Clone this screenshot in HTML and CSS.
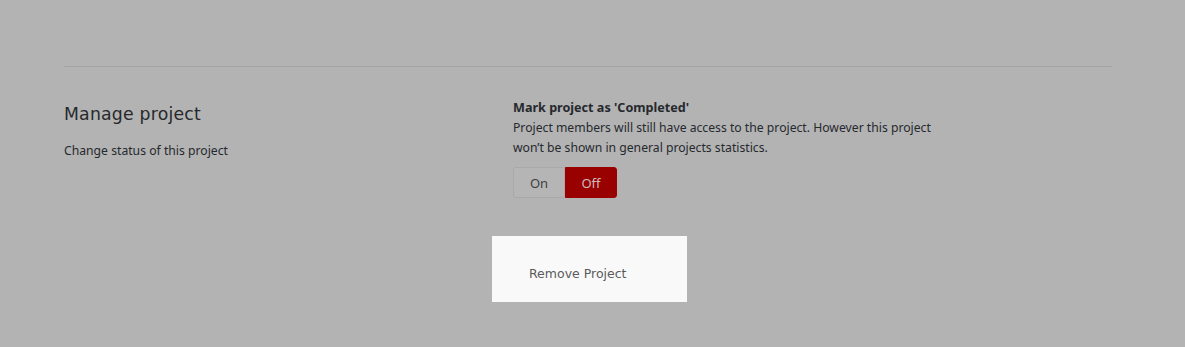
FILE: index.html
```html
<!DOCTYPE html>
<html lang="en">
<head>
  <meta charset="UTF-8" />
  <meta name="viewport" content="width=device-width, initial-scale=1" />
  <title>Project settings</title>
  <link rel="stylesheet" href="styles.css">
</head>
<body>
  <div class="container">
    <hr class="divider">

    <div class="section">
      <div class="section-info">
        <h2>Manage project</h2>
        <p>Change status of this project</p>
      </div>

      <div class="section-body">
        <h4>Mark project as 'Completed'</h4>
        <p class="hint">Project members will still have access to the project. However this project<br>won’t be shown in general projects statistics.</p>

        <div class="toggle">
          <button class="toggle-btn">On</button>
          <button class="toggle-btn active">Off</button>
        </div>

        <div class="spotlight">
          <button class="remove-btn">Remove Project</button>
        </div>
      </div>
    </div>
  </div>
</body>
</html>
```

FILE: styles.css
```css
body {
  font-family: 'Noto Sans', 'Open Sans', sans-serif;
  background: #b3b3b3;
  margin: 0;
  color: #26292e;
}
.container {
  padding: 66px 73px 0 64px;
}
.divider {
  border: none;
  border-top: 1px solid #a4a4a4;
  margin: 0;
}
.section {
  display: grid;
  grid-template-columns: 449px 1fr;
  padding-top: 31px;
}
.section-info h2 {
  font-family: 'DejaVu Sans', sans-serif;
  font-weight: normal;
  font-size: 17.3px;
  color: #27292d;
  margin: 6px 0 0;
  letter-spacing: 0.2px;
}
.section-info p {
  font-size: 12.2px;
  margin: 18px 0 0;
}
.section-body h4 {
  font-size: 12.6px;
  font-weight: bold;
  margin: 0;
  line-height: 19px;
}
.hint {
  font-size: 12.2px;
  line-height: 19.5px;
  margin: 1px 0 0;
}
.toggle {
  display: flex;
  margin-top: 10px;
}
.toggle-btn {
  font-family: 'Noto Sans', sans-serif;
  font-size: 13px;
  width: 52px;
  height: 31px;
  border: 1px solid #a9a9a9;
  background: #b5b5b5;
  color: #404040;
  border-radius: 3px 0 0 3px;
  cursor: pointer;
}
.toggle-btn.active {
  background: #990000;
  border-color: #990000;
  color: #cdbcbc;
  border-radius: 0 3px 3px 0;
}
.spotlight {
  background: #f9f9f9;
  width: 195px;
  height: 66px;
  margin: 38px 0 0 -21px;
  display: flex;
  align-items: center;
}
.remove-btn {
  font-family: 'DejaVu Sans', sans-serif;
  font-size: 12.5px;
  color: #5b5b5b;
  background: none;
  border: none;
  padding: 8px 0 0 37px;
  cursor: pointer;
}
```
